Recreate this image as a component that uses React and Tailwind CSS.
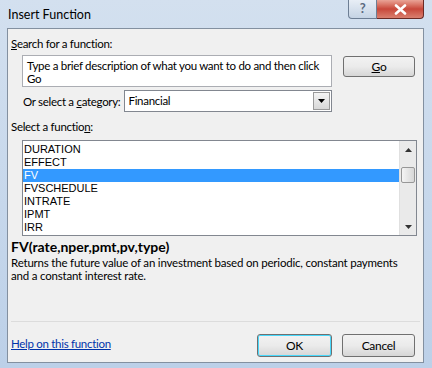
export default function App() {
  const items = ["DURATION", "EFFECT", "FV", "FVSCHEDULE", "INTRATE", "IPMT", "IRR"];
  const btn =
    "flex items-center justify-center rounded-[3px] border border-[#707070] bg-gradient-to-b from-[#f2f2f2] via-[#ebebeb] to-[#d6d6d6] text-[12px] text-black";
  return (
    <div className="w-[432px] h-[368px] flex flex-col overflow-hidden bg-gradient-to-b from-[#d3e0ef] to-[#bcd0e8] font-['Lato','Noto_Sans',sans-serif] text-[11.5px] tracking-[-0.3px] text-black">
      {/* title bar */}
      <div className="h-[28px] flex items-start shrink-0">
        <div className="pl-[8px] pt-[6px] text-[12.5px] tracking-normal text-black">Insert Function</div>
        <div className="ml-auto mr-[8px] flex">
          <div className="w-[29px] h-[19px] flex items-center justify-center rounded-bl-[4px] border border-t-0 border-[#6d7e94] bg-gradient-to-b from-[#e8eef6] to-[#c5d3e4] text-[13px] font-bold text-[#5b6a80]">
            ?
          </div>
          <div className="w-[47px] h-[19px] flex items-center justify-center rounded-br-[4px] border border-l-0 border-t-0 border-[#6b2a24] bg-gradient-to-b from-[#e9a396] via-[#c8473a] to-[#d97f6f]">
            <svg width="13" height="11" viewBox="0 0 13 11">
              <path d="M2 1.5 L11 9.5 M11 1.5 L2 9.5" stroke="#ffffff" strokeWidth="2.6" strokeLinecap="round" />
            </svg>
          </div>
        </div>
      </div>
      {/* panel */}
      <div className="flex-1 ml-[7px] mr-[8px] mb-[5px] border border-[#8390a0] bg-[#f0f0f0] flex flex-col">
        <div className="pl-[3px] pt-[7px] leading-[15px]">
          <span className="underline">S</span>earch for a function:
        </div>
        <div className="flex items-start mt-[4px]">
          <div className="ml-[14px] w-[310px] h-[32px] border border-[#abadb3] bg-white px-[4px] pt-[3px] leading-[13px]">
            Type a brief description of what you want to do and then click Go
          </div>
          <div className={`${btn} ml-[11px] mt-[1px] w-[72px] h-[21px]`}>
            <span>
              <span className="underline">G</span>o
            </span>
          </div>
        </div>
        <div className="flex items-center mt-[3px] ml-[15px]">
          <span className="leading-[15px]">
            Or select a <span className="underline">c</span>ategory:
          </span>
          <div className="ml-[4px] w-[208px] h-[22px] border border-[#828790] bg-white flex items-center">
            <span className="pl-[3px] flex-1">Financial</span>
            <div className="w-[17px] h-[18px] mr-[1px] border border-[#9a9a9a] bg-gradient-to-b from-[#f4f4f4] to-[#d8d8d8] flex items-center justify-center">
              <svg width="7" height="4" viewBox="0 0 7 4">
                <path d="M0 0 L7 0 L3.5 4 Z" fill="#000" />
              </svg>
            </div>
          </div>
        </div>
        <div className="pl-[3px] mt-[7px] leading-[15px]">
          Select a functio<span className="underline">n</span>:
        </div>
        <div className="ml-[14px] mt-[6px] w-[395px] h-[96px] border border-[#828790] bg-white flex">
          <div className="flex-1 pt-[2px] font-['Liberation_Sans',sans-serif] text-[11px] tracking-normal">
            {items.map((it) => (
              <div
                key={it}
                className={`h-[13px] leading-[13px] pl-[1px] ${it === "FV" ? "bg-[#3399ff] text-white" : "text-black"}`}
              >
                {it}
              </div>
            ))}
          </div>
          <div className="w-[17px] flex flex-col bg-[#eaeaea] border-l border-[#e0e0e0]">
            <div className="h-[17px] flex items-center justify-center">
              <svg width="7" height="4" viewBox="0 0 7 4">
                <path d="M0 4 L7 4 L3.5 0 Z" fill="#333" />
              </svg>
            </div>
            <div className="mt-[9px] mx-[1px] h-[16px] rounded-[2px] border border-[#979797] bg-gradient-to-r from-[#f4f4f4] to-[#d7d7d7]" />
            <div className="flex-1" />
            <div className="h-[17px] flex items-center justify-center">
              <svg width="7" height="4" viewBox="0 0 7 4">
                <path d="M0 0 L7 0 L3.5 4 Z" fill="#333" />
              </svg>
            </div>
          </div>
        </div>
        <div className="pl-[3px] mt-[3px] leading-[16px] font-bold text-[14px] tracking-normal">FV(rate,nper,pmt,pv,type)</div>
        <div className="pl-[3px] pr-[4px] mt-[1px] leading-[13px] tracking-[-0.2px]">
          Returns the future value of an investment based on periodic, constant payments
          <br />
          and a constant interest rate.
        </div>
        <div className="flex-1" />
        <div className="mx-[3px] h-px bg-[#dcdcdc]" />
        <div className="flex items-start h-[40px] pt-[12px]">
          <span className="pl-[3px] mt-[2px] leading-[16px] text-[#0033aa] underline">Help on this function</span>
          <div className={`${btn} ml-auto w-[75px] h-[23px] border-[#3c7fb1] shadow-[inset_0_0_0_1px_#48d8fb]`}>OK</div>
          <div className={`${btn} ml-[10px] mr-[8px] w-[73px] h-[23px]`}>Cancel</div>
        </div>
      </div>
    </div>
  );
}
